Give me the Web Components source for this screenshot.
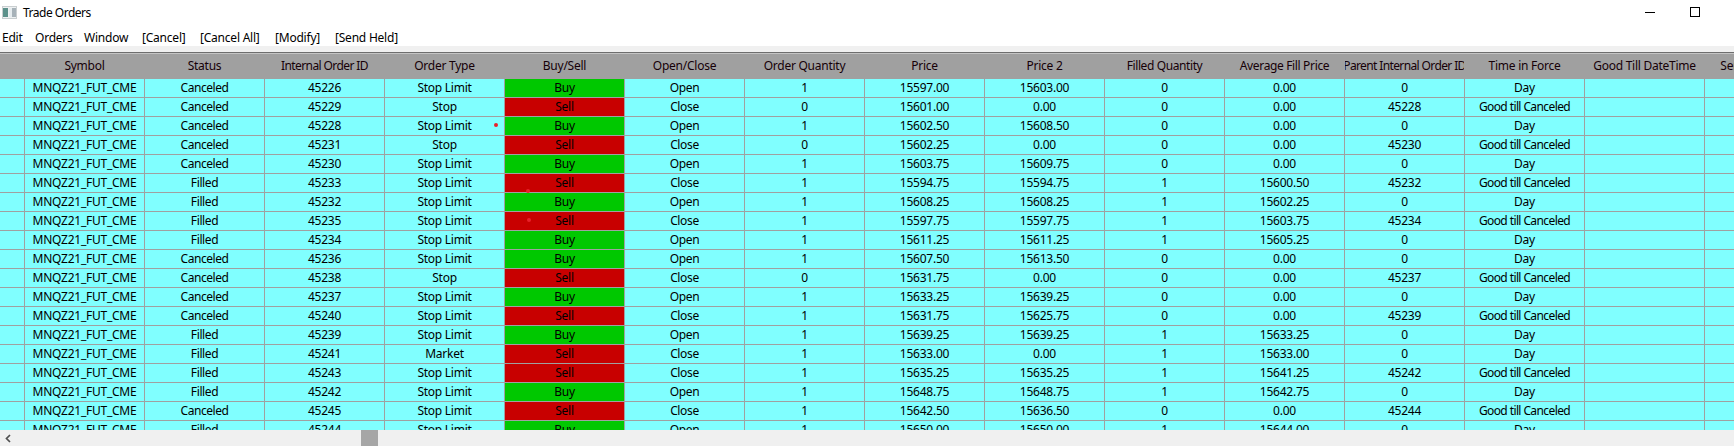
<!DOCTYPE html>
<html>
<head>
<meta charset="utf-8">
<title>Trade Orders</title>
<style>
html,body{margin:0;padding:0;background:#fff;overflow:hidden}
body{font:12px "Noto Sans",sans-serif;color:#000}
</style>
</head>
<body>
<trade-window></trade-window>
<script>
const FONT = '"Noto Sans",sans-serif';

class TitleBar extends HTMLElement{
  constructor(){super();this.attachShadow({mode:'open'}).innerHTML=`
  <style>
    :host{display:flex;align-items:center;height:30px;background:#fff;font:12px ${FONT};letter-spacing:-.5px;box-sizing:border-box;padding:0 0 6px 2px}
    svg{display:block;flex:none}
    .t{margin-left:6px;flex:1}
    .b{flex:none;width:45px;height:24px;display:flex;align-items:center;justify-content:center}
    .gap{flex:none;width:17px}
  </style>
  <svg width="15" height="13" viewBox="0 0 15 13">
    <rect x="0" y="0" width="15" height="13" fill="#c9ced0"/>
    <rect x="1" y="1" width="13" height="11" fill="#eef1f2"/>
    <rect x="1" y="2" width="5" height="9" fill="#5c918b"/>
    <rect x="7" y="2" width="3" height="9" fill="#e6ecef"/>
    <rect x="10" y="2" width="4" height="9" fill="#a7b2b9"/>
  </svg>
  <span class="t"><slot></slot></span>
  <span class="b"><svg width="10" height="1"><rect width="10" height="1" fill="#000"/></svg></span>
  <span class="b"><svg width="10" height="10"><rect x=".5" y=".5" width="9" height="9" fill="none" stroke="#000"/></svg></span>
  <span class="gap"></span>`;}
}
customElements.define('title-bar',TitleBar);

class MenuBar extends HTMLElement{
  constructor(){super();this.attachShadow({mode:'open'}).innerHTML=`
  <style>
    :host{display:flex;align-items:center;height:16px;box-sizing:border-box;padding:0 0 2px 2px;background:#fff;font:12px ${FONT};letter-spacing:-.22px;white-space:nowrap}
  </style><slot></slot>`;}
}
customElements.define('menu-bar',MenuBar);

class MenuItem extends HTMLElement{
  constructor(){super();this.attachShadow({mode:'open'}).innerHTML=`
  <style>:host{display:block;flex:none}</style><slot></slot>`;}
}
customElements.define('menu-item',MenuItem);

const COLS=['','Symbol','Status','Internal Order ID','Order Type','Buy/Sell','Open/Close','Order Quantity','Price','Price 2','Filled Quantity','Average Fill Price','Parent Internal Order ID','Time in Force','Good Till DateTime','Service Order ID'];
const TPL='25px '+Array(15).fill('120px').join(' ');
const SPACING={
  'Internal Order ID':-.6,'Parent Internal Order ID':-.62,'Filled Quantity':-.4,'Average Fill Price':-.35,
  'Canceled':-.45,'Filled':-.4,'Good till Canceled':-.6,'Close':-.35,'Open':-.35
};

class GridCell extends HTMLElement{
  constructor(){super();this.attachShadow({mode:'open'}).innerHTML=`
  <style>
    :host{display:flex;align-items:center;justify-content:center;overflow:hidden;white-space:nowrap;box-sizing:border-box;border-right:1px solid #a0a0a0;height:100%;padding-bottom:2px}
    :host([side="Buy"]){background:#00c800}
    :host([side="Sell"]){background:#c80000}
    span{flex:none}
  </style><span><slot></slot></span>`;}
}
customElements.define('grid-cell',GridCell);

class GridRow extends HTMLElement{
  constructor(){super();this.attachShadow({mode:'open'}).innerHTML=`
  <style>
    :host{display:grid;grid-template-columns:${TPL};height:19px;box-sizing:border-box;border-bottom:1px solid #a0a0a0;background:#80ffff;width:1825px}
    :host([head]){height:25px;background:#a0a0a0;color:#160008}
  </style><slot></slot>`;}
}
customElements.define('grid-row',GridRow);

const S='MNQZ21_FUT_CME', G='Good till Canceled', D='Day', L='Stop Limit';
const ROWS=[
['Canceled','45226',L,'Buy','Open','1','15597.00','15603.00','0','0.00','0',D],
['Canceled','45229','Stop','Sell','Close','0','15601.00','0.00','0','0.00','45228',G],
['Canceled','45228',L,'Buy','Open','1','15602.50','15608.50','0','0.00','0',D],
['Canceled','45231','Stop','Sell','Close','0','15602.25','0.00','0','0.00','45230',G],
['Canceled','45230',L,'Buy','Open','1','15603.75','15609.75','0','0.00','0',D],
['Filled','45233',L,'Sell','Close','1','15594.75','15594.75','1','15600.50','45232',G],
['Filled','45232',L,'Buy','Open','1','15608.25','15608.25','1','15602.25','0',D],
['Filled','45235',L,'Sell','Close','1','15597.75','15597.75','1','15603.75','45234',G],
['Filled','45234',L,'Buy','Open','1','15611.25','15611.25','1','15605.25','0',D],
['Canceled','45236',L,'Buy','Open','1','15607.50','15613.50','0','0.00','0',D],
['Canceled','45238','Stop','Sell','Close','0','15631.75','0.00','0','0.00','45237',G],
['Canceled','45237',L,'Buy','Open','1','15633.25','15639.25','0','0.00','0',D],
['Canceled','45240',L,'Sell','Close','1','15631.75','15625.75','0','0.00','45239',G],
['Filled','45239',L,'Buy','Open','1','15639.25','15639.25','1','15633.25','0',D],
['Filled','45241','Market','Sell','Close','1','15633.00','0.00','1','15633.00','0',D],
['Filled','45243',L,'Sell','Close','1','15635.25','15635.25','1','15641.25','45242',G],
['Filled','45242',L,'Buy','Open','1','15648.75','15648.75','1','15642.75','0',D],
['Canceled','45245',L,'Sell','Close','1','15642.50','15636.50','0','0.00','45244',G],
['Filled','45244',L,'Buy','Open','1','15650.00','15650.00','1','15644.00','0',D]
];

class OrderGrid extends HTMLElement{
  constructor(){
    super();
    const cellHtml=(c,i,head)=>{
      const side=!head&&i===5?` side="${c}"`:'';
      const ls=SPACING[c]!==undefined?` style="letter-spacing:${SPACING[c]}px"`:'';
      return `<grid-cell${side}${ls}>${c}</grid-cell>`;
    };
    const rowHtml=(cells,head)=>`<grid-row${head?' head':''}>${cells.map((c,i)=>cellHtml(c,i,head)).join('')}</grid-row>`;
    const dots=[[496,71],[528,137],[529,166]];
    this.attachShadow({mode:'open'}).innerHTML=`
    <style>
      :host{display:block;position:relative;flex:1;min-height:0;overflow:hidden;font:12px ${FONT};letter-spacing:-.25px;background:#80ffff}
      i{position:absolute;width:4px;height:4px;border-radius:50%;background:#e8202a}
    </style>
    ${rowHtml(COLS,true)}
    ${ROWS.map(r=>rowHtml(['',S,...r,'',''],false)).join('')}
    ${dots.map(d=>`<i style="left:${d[0]-2}px;top:${d[1]-2}px"></i>`).join('')}`;
  }
}
customElements.define('order-grid',OrderGrid);

class HScroll extends HTMLElement{
  constructor(){super();this.attachShadow({mode:'open'}).innerHTML=`
  <style>
    :host{display:flex;align-items:center;flex:none;height:16px;background:#f0f0f0}
    .a{flex:none;width:361px;display:flex;align-items:center;padding-left:5px;box-sizing:border-box}
    .t{flex:none;width:17px;height:16px;background:#a6a6a6}
    svg{display:block}
  </style>
  <span class="a"><svg width="6" height="9" viewBox="0 0 6 9"><path d="M5 1 1.5 4.5 5 8" fill="none" stroke="#505050" stroke-width="1.7"/></svg></span>
  <span class="t"></span>`;}
}
customElements.define('h-scroll',HScroll);

class TradeWindow extends HTMLElement{
  constructor(){super();this.attachShadow({mode:'open'}).innerHTML=`
  <style>
    :host{display:flex;flex-direction:column;width:1734px;height:446px;overflow:hidden;background:#fff}
    .band{flex:none;height:6px;background:#f0f0f0}
    .rule{flex:none;height:2px;background:linear-gradient(#6e6e6e 0 1px,#c4c4c4 1px)}
  </style>
  <title-bar>Trade Orders</title-bar>
  <menu-bar>
    <menu-item style="width:33px">Edit</menu-item>
    <menu-item style="width:49px">Orders</menu-item>
    <menu-item style="width:58px">Window</menu-item>
    <menu-item style="width:58px">[Cancel]</menu-item>
    <menu-item style="width:75px">[Cancel All]</menu-item>
    <menu-item style="width:60px">[Modify]</menu-item>
    <menu-item>[Send Held]</menu-item>
  </menu-bar>
  <div class="band"></div>
  <div class="rule"></div>
  <order-grid></order-grid>
  <h-scroll></h-scroll>`;}
}
customElements.define('trade-window',TradeWindow);
</script>
</body>
</html>
